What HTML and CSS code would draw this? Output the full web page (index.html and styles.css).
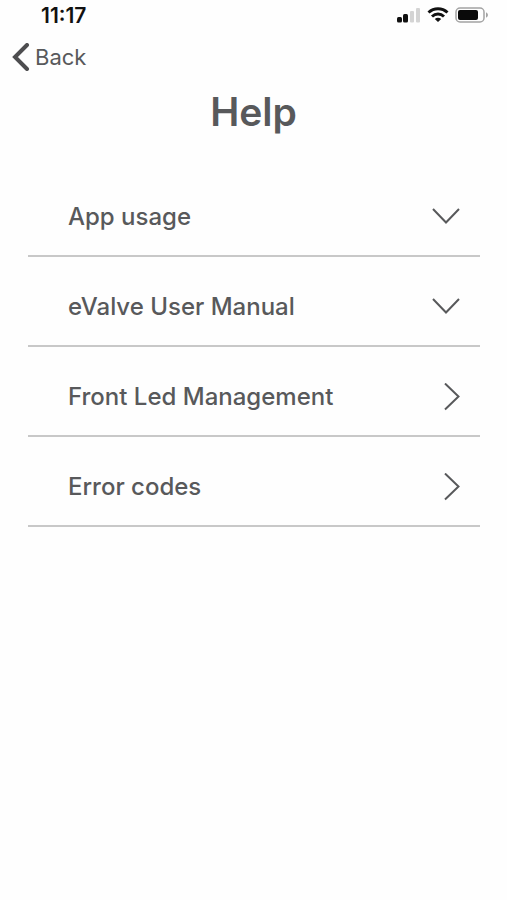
FILE: index.html
```html
<!DOCTYPE html>
<html lang="en">
<head>
  <meta charset="UTF-8">
  <meta name="viewport" content="width=device-width, initial-scale=1.0">
  <title>Help</title>
  <link rel="stylesheet" href="styles.css">
</head>
<body>
  <div class="status-bar">
    <span class="time">11:17</span>
    <div class="status-icons">
      <svg width="24" height="16" viewBox="0 0 24 16" aria-hidden="true">
        <rect x="0" y="10" width="5" height="5.500" rx="1.5" fill="#111"/>
        <rect x="6" y="7" width="5" height="8.500" rx="1.5" fill="#111"/>
        <rect x="13" y="4" width="4" height="11.500" rx="1" fill="#d4d4d4"/>
        <rect x="19" y="1" width="4" height="14.500" rx="1" fill="#d4d4d4"/>
      </svg>
      <svg width="22" height="16" viewBox="0 0 22 16" fill="none" stroke="#111" stroke-width="3" aria-hidden="true">
        <path d="M1.500 5.500C7 .5 15 .5 20.500 5.500"/>
        <path d="M5 9.500c3.500-3.200 8.500-3.200 12 0"/>
        <path d="M11 15l-3.200-3c1.900-1.600 4.500-1.600 6.400 0z" fill="#111" stroke="none"/>
      </svg>
      <svg width="34" height="16" viewBox="0 0 34 16" aria-hidden="true">
        <rect x="1" y="1" width="28" height="14" rx="4" fill="none" stroke="#a3a3a3" stroke-width="1.500"/>
        <rect x="3" y="3" width="20" height="10" rx="2" fill="#0a0a0a"/>
        <path d="M31 5.500c2.600.5 2.600 4.500 0 5z" fill="#a3a3a3"/>
      </svg>
    </div>
  </div>

  <nav class="nav">
    <a class="back" href="#">
      <svg width="18" height="28" viewBox="0 0 18 28" fill="none" stroke="#4d4d4f" stroke-width="4" stroke-linecap="round" aria-hidden="true">
        <path d="M15 2L3 14l12 12"/>
      </svg>
      Back
    </a>
  </nav>

  <main>
    <h1>Help</h1>
    <ul class="menu">
      <li>
        <button class="menu-item" type="button" aria-expanded="false">
          App usage
          <svg class="chevron" width="28" height="28" viewBox="0 0 28 28" aria-hidden="true"><path d="M1 6l13 13.500L27 6"/></svg>
        </button>
      </li>
      <li>
        <button class="menu-item" type="button" aria-expanded="false">
          eValve User Manual
          <svg class="chevron" width="28" height="28" viewBox="0 0 28 28" aria-hidden="true"><path d="M1 6l13 13.500L27 6"/></svg>
        </button>
      </li>
      <li>
        <a class="menu-item" href="#">
          Front Led Management
          <svg class="chevron" width="28" height="28" viewBox="0 0 28 28" aria-hidden="true"><path d="M13 .5L26.500 13.500 13 26.500"/></svg>
        </a>
      </li>
      <li>
        <a class="menu-item" href="#">
          Error codes
          <svg class="chevron" width="28" height="28" viewBox="0 0 28 28" aria-hidden="true"><path d="M13 .5L26.500 13.500 13 26.500"/></svg>
        </a>
      </li>
    </ul>
  </main>
</body>
</html>
```
FILE: styles.css
```css
* {
  box-sizing: border-box;
}
body {
  font-family: Inter, "Liberation Sans", sans-serif;
  margin: 0;
  background-color: #fefefe;
  color: #58595b;
}
.status-bar {
  display: flex;
  justify-content: space-between;
  align-items: center;
  height: 30px;
  padding: 0 18px 0 41px;
}
.time {
  font-size: 21px;
  font-weight: 600;
  color: #111;
}
.status-icons {
  display: flex;
  gap: 6px;
}
.nav {
  display: flex;
  padding: 12px 12px 0;
}
.back {
  display: flex;
  align-items: center;
  gap: 5px;
  font-size: 22px;
  line-height: 30px;
  color: #58595b;
  text-decoration: none;
}
h1 {
  margin: 16px 0 0;
  font-size: 39px;
  font-weight: 600;
  line-height: 48px;
  text-align: center;
}
.menu {
  list-style: none;
  margin: 31px 27px 0 28px;
  padding: 0;
}
.menu li {
  border-bottom: 2px solid #c8c8c8;
}
.menu-item {
  display: flex;
  justify-content: space-between;
  align-items: center;
  width: 100%;
  padding: 35px 20px 23px 40px;
  border: none;
  background: none;
  font-family: inherit;
  font-size: 24px;
  font-weight: 500;
  line-height: 30px;
  color: #58595b;
  text-align: left;
  text-decoration: none;
  cursor: pointer;
}
.chevron {
  fill: none;
  stroke: #58595b;
  stroke-width: 2;
}
```
